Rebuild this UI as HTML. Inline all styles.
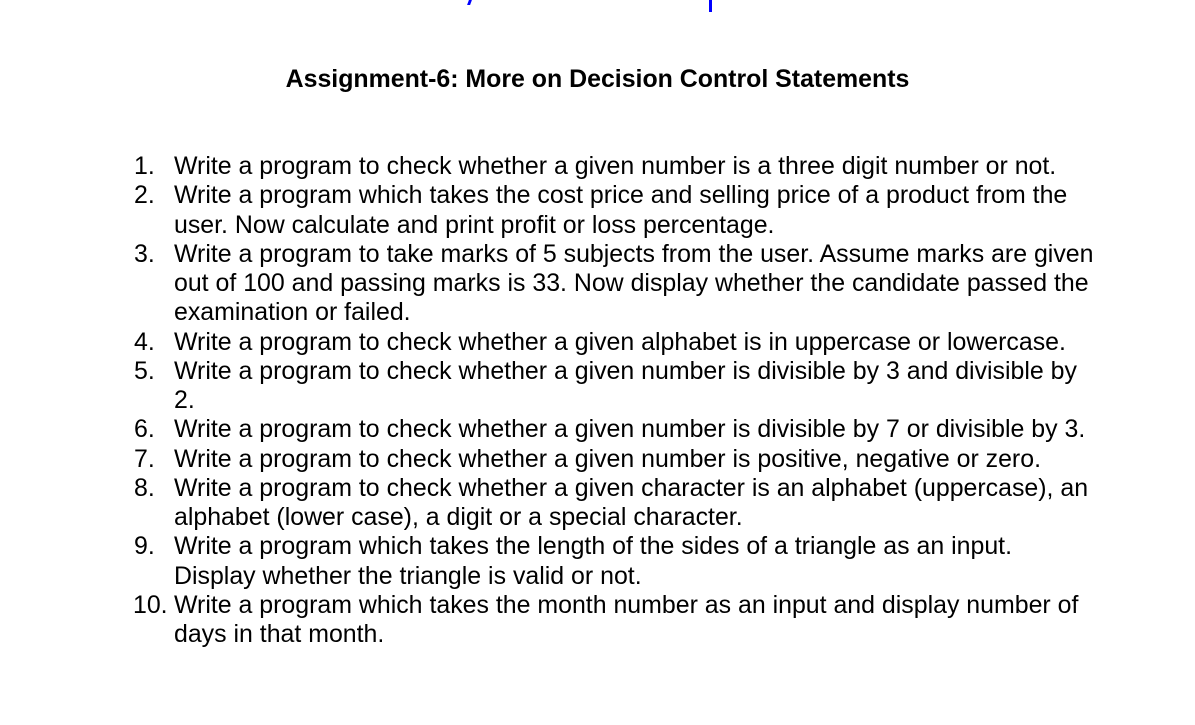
<html><head><style>
body{margin:0;width:1195px;height:725px;background:#fff;font-family:"Liberation Sans",sans-serif;color:#000;position:relative;overflow:hidden}
h1{position:absolute;left:0;width:1195px;top:65px;margin:0;text-align:center;font-size:24.9px;font-weight:bold;white-space:nowrap}
.l{position:absolute;left:0;top:152px;font-size:24.9px;line-height:29.25px;white-space:nowrap}
.r{position:relative;padding-left:174px}
.n{position:absolute;left:134px}
</style></head><body>
<div style="position:absolute;left:468px;top:0;width:3px;height:5px;background:#00f;transform:skewX(-20deg)"></div>
<div style="position:absolute;left:709px;top:0;width:3px;height:12px;background:#00f"></div>
<h1>Assignment-6: More on Decision Control Statements</h1>
<div class="l">
<div class="r"><span class="n">1.</span>Write a program to check whether a given number is a three digit number or not.</div>
<div class="r"><span class="n">2.</span>Write a program which takes the cost price and selling price of a product from the<br>user. Now calculate and print profit or loss percentage.</div>
<div class="r"><span class="n">3.</span>Write a program to take marks of 5 subjects from the user. Assume marks are given<br>out of 100 and passing marks is 33. Now display whether the candidate passed the<br>examination or failed.</div>
<div class="r"><span class="n">4.</span>Write a program to check whether a given alphabet is in uppercase or lowercase.</div>
<div class="r"><span class="n">5.</span>Write a program to check whether a given number is divisible by 3 and divisible by<br>2.</div>
<div class="r"><span class="n">6.</span>Write a program to check whether a given number is divisible by 7 or divisible by 3.</div>
<div class="r"><span class="n">7.</span>Write a program to check whether a given number is positive, negative or zero.</div>
<div class="r"><span class="n">8.</span>Write a program to check whether a given character is an alphabet (uppercase), an<br>alphabet (lower case), a digit or a special character.</div>
<div class="r"><span class="n">9.</span>Write a program which takes the length of the sides of a triangle as an input.<br>Display whether the triangle is valid or not.</div>
<div class="r"><span class="n" style="left:133px">10.</span>Write a program which takes the month number as an input and display number of<br>days in that month.</div>
</div>
</body></html>
